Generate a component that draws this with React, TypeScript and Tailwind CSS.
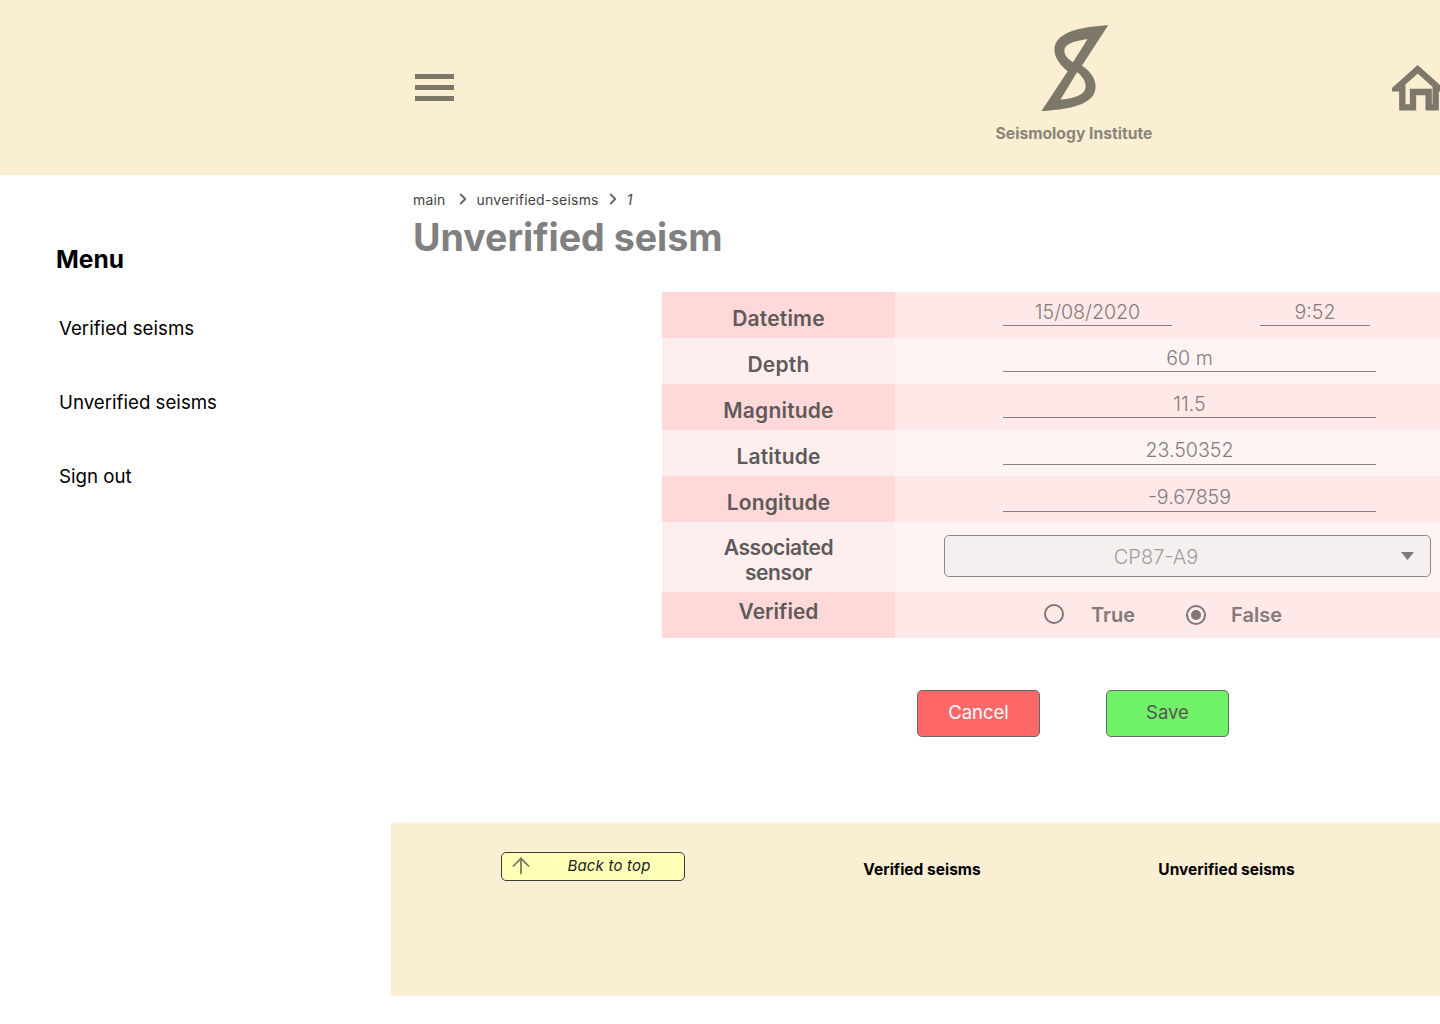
import { ArrowUp, ChevronRight } from "lucide-react"

const rows = [
  { label: "Depth", value: "60 m", tint: "light", box: "mt-[8px] h-[26px]" },
  { label: "Magnitude", value: "11.5", tint: "dark", box: "mt-[8px] h-[26px]" },
  { label: "Latitude", value: "23.50352", tint: "light", box: "mt-[8px] h-[27px]" },
  { label: "Longitude", value: "-9.67859", tint: "dark", box: "mt-[9px] h-[27px]" },
]

const Logo = () => (
  <svg width="70" height="88" viewBox="180 40 208 265" className="ml-[46px]">
    <path
      fillRule="evenodd"
      fill="#7d7869"
      d="M384 44C310 48 222 62 222 118C222 140 240 165 262 182L183 302C290 296 346 275 346 228C346 200 325 180 305 165ZM322 85C275 92 252 102 252 120C252 135 263 146 278 155ZM240 268C290 262 316 250 316 228C316 210 305 195 290 185Z"
    />
  </svg>
)

const HomeIcon = () => (
  <svg width="48" height="46" viewBox="95 43 144 138" className="ml-[238px] shrink-0">
    <path
      d="M108 113L172 56L236 113H226V170H205V124H158V170H126V113Z"
      fill="none"
      stroke="#7d7869"
      strokeWidth="19"
      strokeLinejoin="miter"
    />
  </svg>
)

const Header = () => (
  <header className="flex h-[175px] shrink-0 items-center bg-[#faeed3] pl-[415px]">
    <div className="flex w-[39px] flex-col gap-[6px]">
      <div className="h-[5px] bg-[#7d7869]" />
      <div className="h-[5px] bg-[#7d7869]" />
      <div className="h-[5px] bg-[#7d7869]" />
    </div>
    <div className="ml-[540px] flex w-[160px] shrink-0 flex-col pb-[7px]">
      <Logo />
      <p className="mt-[12px] whitespace-nowrap text-center text-[15.7px] leading-5 font-bold text-[#8a8578]">Seismology Institute</p>
    </div>
    <HomeIcon />
  </header>
)

const Sidebar = () => (
  <aside className="w-[391px] shrink-0 pl-[56px] pt-[68px]">
    <h2 className="text-[24.5px] leading-8 font-bold text-black">Menu</h2>
    <nav className="mt-[40px] ml-[3px] flex flex-col gap-[46px] text-[18.7px] leading-7 text-black">
      <a>Verified seisms</a>
      <a>Unverified seisms</a>
      <a>Sign out</a>
    </nav>
  </aside>
)

const Label = ({ children, dark }: { children: React.ReactNode; dark: boolean }) => (
  <div
    className={`flex w-[233px] shrink-0 items-center justify-center pt-[6px] text-center text-[21px] leading-[25px] font-semibold tracking-[0.2px] text-[#5f5a5a] ${
      dark ? "bg-[#ffd9d9]" : "bg-[#ffeeee]"
    }`}
  >
    {children}
  </div>
)

const Field = ({ value, className }: { value: string; className: string }) => (
  <div className={`border-b border-[#8a7f7f] text-center text-[19.6px] leading-6 font-light text-[#857c7c] ${className}`}>
    {value}
  </div>
)

const SeismForm = () => (
  <div className="ml-[271px] mt-[34px] flex w-[778px] flex-col">
    <div className="flex h-[46px]">
      <Label dark>Datetime</Label>
      <div className="flex flex-1 items-start bg-[#ffe8e8] pl-[108px]">
        <Field value="15/08/2020" className="mt-[8px] h-[26px] w-[169px]" />
        <Field value="9:52" className="mt-[8px] ml-[88px] h-[26px] w-[110px]" />
      </div>
    </div>
    {rows.map((row) => (
      <div key={row.label} className="flex h-[46px]">
        <Label dark={row.tint === "dark"}>{row.label}</Label>
        <div className={`flex-1 pl-[108px] ${row.tint === "dark" ? "bg-[#ffe8e8]" : "bg-[#fff4f4]"}`}>
          <Field value={row.value} className={`w-[373px] ${row.box}`} />
        </div>
      </div>
    ))}
    <div className="flex h-[70px]">
      <Label dark={false}>
        <span className="tracking-[-0.4px]">
          Associated
          <br />
          sensor
        </span>
      </Label>
      <div className="flex flex-1 items-center bg-[#fff4f4] pb-[2px] pl-[49px]">
        <div className="relative flex h-[42px] w-[487px] items-center justify-center rounded-[5px] border border-[#8f8686] bg-[#f5efef] pt-[1px] pr-[63px] text-[20px] font-light text-[#a39c9c]">
          CP87-A9
          <svg width="13" height="8" viewBox="0 0 13 8" className="absolute right-[16px] top-[16px]">
            <path d="M0 0H13L6.5 8Z" fill="#7f7878" />
          </svg>
        </div>
      </div>
    </div>
    <div className="flex h-[46px]">
      <div className="flex w-[233px] shrink-0 items-center justify-center bg-[#ffd9d9] pb-[7px] text-[21px] font-semibold text-[#5f5a5a]">
        Verified
      </div>
      <div className="flex flex-1 items-center bg-[#ffe8e8] pl-[149px] text-[20px] font-semibold text-[#857a7a]">
        <span className="-mt-[3px] h-[20px] w-[20px] rounded-full border-2 border-[#7f7676]" />
        <span className="ml-[27px]">True</span>
        <span className="-mt-[1px] ml-[51px] flex h-[20px] w-[20px] items-center justify-center rounded-full border-2 border-[#7f7676]">
          <span className="h-[10px] w-[10px] rounded-full bg-[#7f7676]" />
        </span>
        <span className="ml-[25px]">False</span>
      </div>
    </div>
  </div>
)

const Footer = () => (
  <footer className="mt-[86px] flex h-[173px] items-start bg-[#faeed3] pl-[110px]">
    <button className="relative mt-[29px] flex h-[29px] w-[184px] items-center justify-center rounded-[5px] border border-[#3a3a3a] bg-[#ffffb8] pl-[32px] text-[15px] tracking-[0.2px] italic text-[#222]">
      <ArrowUp size={26} strokeWidth={1.6} color="#77745f" className="absolute left-[6px] top-0" />
      Back to top
    </button>
    <a className="ml-[177px] mt-[37px] w-[120px] whitespace-nowrap text-center text-[15.5px] leading-5 font-bold text-black">Verified seisms</a>
    <a className="ml-[175px] mt-[37px] w-[139px] whitespace-nowrap text-center text-[15.5px] leading-5 font-bold text-black">Unverified seisms</a>
  </footer>
)

export default function App() {
  return (
    <div className="flex h-[1024px] w-[1440px] flex-col overflow-hidden bg-white font-[family-name:Inter,sans-serif]">
      <Header />
      <div className="flex flex-1">
        <Sidebar />
        <main className="w-[1049px]">
          <div className="ml-[22px] mt-[14px] flex h-5 items-center text-[14px] tracking-[0.2px] text-[#444]">
            <span>main</span>
            <ChevronRight size={18} strokeWidth={2.4} color="#666" className="ml-[8px] mr-[5px]" />
            <span>unverified-seisms</span>
            <ChevronRight size={18} strokeWidth={2.4} color="#666" className="ml-[5px] mr-[5px]" />
            <span className="italic">1</span>
          </div>
          <h1 className="ml-[22px] mt-[9px] whitespace-nowrap text-[37.6px] leading-[40px] font-bold text-[#808080]">Unverified seism</h1>
          <SeismForm />
          <div className="ml-[526px] mt-[52px] flex gap-[66px]">
            <button className="h-[47px] w-[123px] rounded-[5px] border border-[#666] bg-[#ff6868] pb-[2px] text-[18.5px] text-white">Cancel</button>
            <button className="h-[47px] w-[123px] rounded-[5px] border border-[#666] bg-[#70f268] pb-[2px] text-[18.5px] text-[#555]">Save</button>
          </div>
          <Footer />
        </main>
      </div>
    </div>
  )
}
